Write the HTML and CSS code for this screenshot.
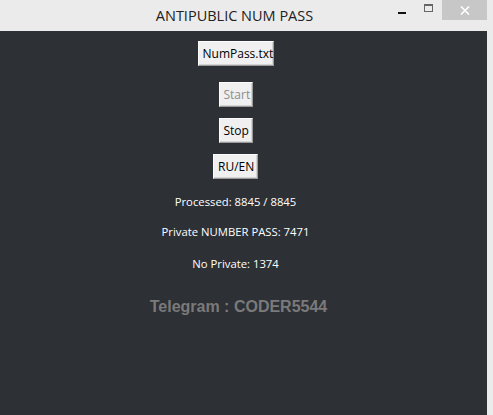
FILE: index.html
```html
<!DOCTYPE html>
<html>
<head>
    <title>ANTIPUBLIC NUM PASS</title>
    <link rel="stylesheet" href="styles.css">
</head>
<body>
    <div class="window">
        <div class="title-bar">
            <span class="title">ANTIPUBLIC NUM PASS</span>
            <div class="controls">
                <span class="ctrl minimize"><span class="dash"></span></span>
                <span class="ctrl maximize"><span class="box"></span></span>
                <span class="ctrl close">
                    <svg width="10" height="9" viewBox="0 0 10 9">
                        <path d="M1 0.5 L9 8.5 M9 0.5 L1 8.5" stroke="#fff" stroke-width="1.6"/>
                    </svg>
                </span>
            </div>
        </div>
        <div class="client">
            <button class="btn btn-file">NumPass.txt</button>
            <button class="btn btn-start" disabled>Start</button>
            <button class="btn btn-stop">Stop</button>
            <button class="btn btn-lang">RU/EN</button>
            <p class="label label-processed">Processed: 8845 / 8845</p>
            <p class="label label-private">Private NUMBER PASS: 7471</p>
            <p class="label label-noprivate">No Private: 1374</p>
            <p class="telegram">Telegram : CODER5544</p>
        </div>
    </div>
</body>
</html>
```

FILE: styles.css
```css
:root {
    --frame: #ebebeb;
    --client-bg: #2d3035;
    --btn-bg: #f0f0f0;
}

* {
    margin: 0;
    padding: 0;
    box-sizing: border-box;
}

body {
    font-family: "Open Sans", "Noto Sans", sans-serif;
    background: var(--frame);
    width: 493px;
    height: 415px;
    overflow: hidden;
}

.window {
    display: flex;
    flex-direction: column;
    height: 415px;
    padding-right: 6px;
}

.title-bar {
    height: 31px;
    display: flex;
    align-items: flex-start;
    justify-content: center;
    position: relative;
}

.title {
    font-size: 14.5px;
    color: #222;
    margin-top: 6px;
    margin-left: -18px;
}

.controls {
    position: absolute;
    top: 0;
    right: 0;
    display: flex;
}

.ctrl {
    display: flex;
    align-items: center;
    justify-content: center;
    height: 20px;
}

.minimize {
    width: 26px;
}

.dash {
    width: 8px;
    height: 2px;
    background: #111;
    margin-top: 5px;
}

.maximize {
    width: 27px;
}

.box {
    width: 9px;
    height: 8px;
    border: 1px solid #666;
    border-top-width: 2px;
    margin-top: -4px;
}

.close {
    width: 45px;
    background: #c7c7c7;
}

.client {
    flex: 1;
    background: var(--client-bg);
    display: flex;
    flex-direction: column;
    align-items: center;
    padding-top: 10px;
    padding-right: 16px;
}

.btn {
    font-family: "Open Sans", "Noto Sans", sans-serif;
    font-size: 12px;
    color: #000;
    background: var(--btn-bg);
    height: 25px;
    padding: 0 4px;
    border: 1px solid;
    border-color: #fbfbfb #9a9a9a #9a9a9a #fbfbfb;
    box-shadow: inset -1px -1px 0 #d4d4d4;
}

.btn-file {
    width: 76px;
}

.btn-start {
    width: 34px;
    margin-top: 16px;
    color: #8d8d8d;
}

.btn-stop {
    width: 34px;
    margin-top: 11px;
}

.btn-lang {
    width: 45px;
    margin-top: 11px;
}

.label {
    color: #fff;
    font-size: 11.3px;
    line-height: 16px;
}

.label-processed {
    margin-top: 15px;
}

.label-private {
    margin-top: 14px;
}

.label-noprivate {
    margin-top: 16px;
}

.telegram {
    font-family: "Liberation Sans", Arial, sans-serif;
    font-weight: bold;
    font-size: 16px;
    color: #7a7a7a;
    margin-top: 26px;
    margin-left: 6px;
}
```
